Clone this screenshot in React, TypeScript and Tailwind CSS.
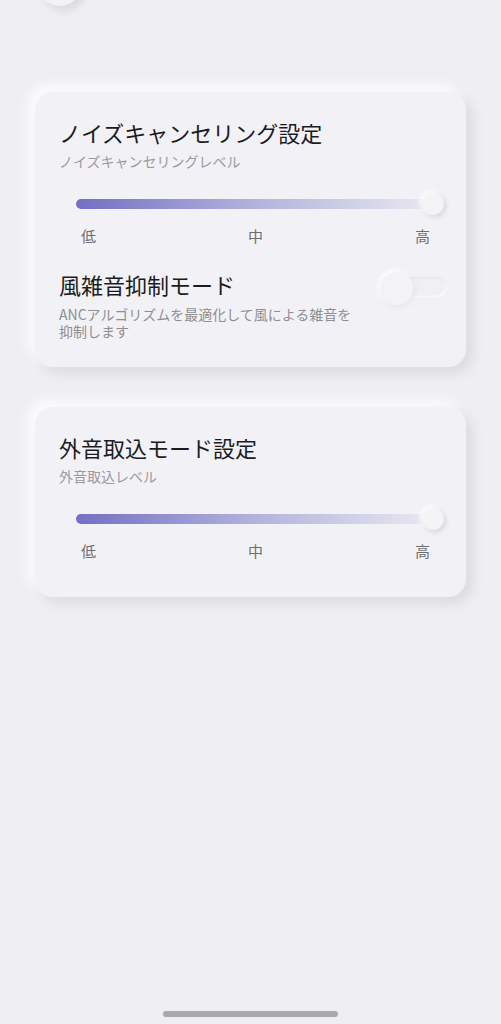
import { useState } from 'react'

const font = { fontFamily: '"Noto Sans CJK JP", "Noto Sans", sans-serif' }

function LevelSlider() {
  return (
    <div>
      <div className="relative ml-[17px] mr-[9px] flex h-[22px] items-center">
        <div className="h-[10px] w-full rounded-full bg-gradient-to-r from-[#7370c3] via-[#b3b2dc] to-[#e9e9f1]" />
        <div className="absolute right-[-11px] top-0 h-[22px] w-[22px] rounded-full bg-[#f4f4f7] shadow-[2px_2px_5px_rgba(0,0,0,0.12),-2px_-2px_4px_rgba(255,255,255,0.9)]" />
      </div>
      <div className="ml-[22px] mr-[12px] mt-[11px] flex justify-between text-[15px] leading-5 text-[#6e6e72]">
        <span>低</span>
        <span>中</span>
        <span>高</span>
      </div>
    </div>
  )
}

function Card({ children, className = '' }: { children: React.ReactNode; className?: string }) {
  return (
    <div
      className={`mx-[35px] rounded-[18px] bg-[#f2f2f6] px-6 pt-6 shadow-[6px_6px_14px_rgba(0,0,0,0.09),-6px_-6px_14px_rgba(255,255,255,0.95)] ${className}`}
    >
      {children}
    </div>
  )
}

export default function App() {
  const [wind, setWind] = useState(false)

  return (
    <div className="flex min-h-[1024px] flex-col bg-[#efeff3]" style={font}>
      <div className="h-[92px] px-[38px]">
        <div className="-mt-[38px] h-[44px] w-[44px] rounded-full bg-[#f3f3f6] shadow-[4px_4px_10px_rgba(0,0,0,0.1),-4px_-4px_10px_rgba(255,255,255,0.9)]" />
      </div>

      <Card className="pb-[27px]">
        <h2 className="text-[22px] leading-8 text-[#1c1c1e]">ノイズキャンセリング設定</h2>
        <p className="mt-1 text-[14px] leading-[18px] text-[#9a9a9e]">ノイズキャンセリングレベル</p>
        <div className="mt-[23px]">
          <LevelSlider />
        </div>

        <div className="mt-[22px] flex items-start justify-between">
          <div>
            <h3 className="text-[22px] leading-8 text-[#1c1c1e]">風雑音抑制モード</h3>
            <p className="mt-[6px] w-[300px] text-[14px] leading-[17px] text-[#8e8e93]">
              ANCアルゴリズムを最適化して風による雑音を抑制します
            </p>
          </div>
          <button
            onClick={() => setWind(!wind)}
            className="relative -mr-[5px] mt-1 h-[33px] w-[67px] shrink-0"
          >
            <span className="absolute left-0 right-0 top-[5px] h-[20px] rounded-full bg-[#f0f0f4] shadow-[inset_1px_1px_3px_rgba(0,0,0,0.06),inset_-1px_-1px_2px_rgba(255,255,255,0.9)]" />
            <span className="absolute left-0 top-0 h-[33px] w-[33px] rounded-full bg-[#f3f3f6] shadow-[2px_2px_6px_rgba(0,0,0,0.05),-2px_-2px_5px_rgba(255,255,255,0.95)]" />
          </button>
        </div>
      </Card>

      <Card className="mt-10 pb-[36px]">
        <h2 className="text-[22px] leading-8 text-[#1c1c1e]">外音取込モード設定</h2>
        <p className="mt-1 text-[14px] leading-[18px] text-[#9a9a9e]">外音取込レベル</p>
        <div className="mt-[23px]">
          <LevelSlider />
        </div>
      </Card>

      <div className="mt-auto flex justify-center pb-[7px]">
        <div className="h-[6px] w-[175px] rounded-full bg-[#a9a9ab]" />
      </div>
    </div>
  )
}
